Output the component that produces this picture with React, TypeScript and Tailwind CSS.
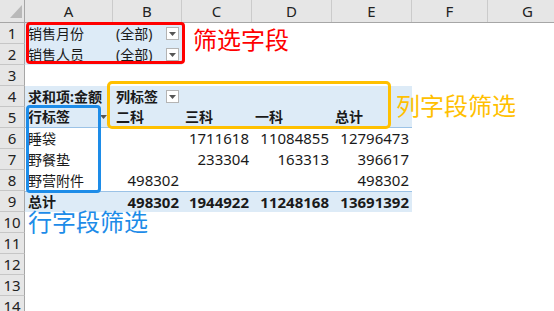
import React from 'react';

type Cell = { t?: string; num?: boolean; bold?: boolean; dd?: 'box' | 'arrow' };
type Row = { blue?: number; line?: 'top' | 'bottom'; bold?: boolean; cells: Cell[] };

const colNames = ['A', 'B', 'C', 'D', 'E', 'F', 'G'];
const colWidths = ['w-[88px]', 'w-[69px]', 'w-[70px]', 'w-[80px]', 'w-[80px]', 'w-[76px]', 'w-[80px]'];

const n = (t: string): Cell => ({ t, num: true });

const rows: Row[] = [
  { blue: 2, cells: [{ t: '销售月份' }, { t: '(全部)', dd: 'box' }] },
  { blue: 2, cells: [{ t: '销售人员' }, { t: '(全部)', dd: 'box' }] },
  { cells: [] },
  { blue: 5, cells: [{ t: '求和项:金额', bold: true }, { t: '列标签', bold: true, dd: 'box' }] },
  {
    blue: 5,
    line: 'bottom',
    cells: [
      { t: '行标签', bold: true, dd: 'arrow' },
      { t: '二科', bold: true },
      { t: '三科', bold: true },
      { t: '一科', bold: true },
      { t: '总计', bold: true },
    ],
  },
  { cells: [{ t: '睡袋' }, {}, n('1711618'), n('11084855'), n('12796473')] },
  { cells: [{ t: '野餐垫' }, {}, n('233304'), n('163313'), n('396617')] },
  { cells: [{ t: '野营附件' }, n('498302'), {}, {}, n('498302')] },
  {
    blue: 5,
    line: 'top',
    bold: true,
    cells: [{ t: '总计' }, n('498302'), n('1944922'), n('11248168'), n('13691392')],
  },
  { cells: [] },
  { cells: [] },
  { cells: [] },
  { cells: [] },
  { cells: [] },
];

function DropButton({ kind }: { kind: 'box' | 'arrow' }) {
  return (
    <span
      className={`ml-auto mr-[3px] flex h-[13px] w-[13px] shrink-0 items-center justify-center ${
        kind === 'box' ? 'border border-[#b4b4b4] bg-white' : ''
      }`}
    >
      <svg width="7" height="4" viewBox="0 0 7 4">
        <path d="M0 0h7L3.5 4z" fill="#555" />
      </svg>
    </span>
  );
}

export default function App() {
  return (
    <div className="relative h-[311px] w-[554px] overflow-hidden bg-white font-['Noto_Sans','Noto_Sans_CJK_SC',sans-serif] text-[#1a1a1a]">
      {/* column headers */}
      <div className="flex h-[23px] border-b border-[#a6a6a6] bg-[#e6e6e6]">
        <div className="relative w-[25px] shrink-0 border-r border-[#a6a6a6]">
          <svg className="absolute left-0 top-0" width="25" height="22" viewBox="0 0 25 22">
            <path d="M10 18L22 18L22 5z" fill="#b9b9b9" />
          </svg>
        </div>
        {colNames.map((c, i) => (
          <div
            key={c}
            className={`${colWidths[i]} flex shrink-0 items-center justify-center border-r border-[#cbcbcb] text-[15px] leading-none text-[#222]`}
          >
            {c}
          </div>
        ))}
      </div>

      {rows.map((row, r) => (
        <div key={r} className="flex h-[21px]">
          <div className="flex w-[25px] shrink-0 items-center justify-center border-b border-r border-[#c6c6c6] border-r-[#a6a6a6] bg-[#e6e6e6] text-[15px] leading-none text-[#222]">
            {r + 1}
          </div>
          {colNames.map((c, i) => {
            const cell = row.cells[i] || {};
            const blue = row.blue !== undefined && i < row.blue;
            const bold = cell.bold || row.bold;
            return (
              <div
                key={c}
                className={`${colWidths[i]} flex shrink-0 items-center overflow-hidden whitespace-nowrap leading-none ${
                  blue ? 'bg-[#ddebf7]' : ''
                } ${blue && row.line === 'bottom' ? 'border-b border-[#9bc2e6]' : ''} ${
                  blue && row.line === 'top' ? 'border-t border-[#9bc2e6]' : ''
                } ${cell.num ? 'justify-end pr-[3px] text-[15px]' : 'pl-[3px] text-[14px]'} ${bold ? 'font-bold' : ''}`}
              >
                {cell.t}
                {cell.dd && <DropButton kind={cell.dd} />}
              </div>
            );
          })}
        </div>
      ))}

      {/* annotations drawn over the sheet */}
      <div className="absolute left-[26px] top-[22px] h-[42px] w-[159px] rounded-[4px] border-[3px] border-[#ff0000]" />
      <div className="absolute left-[193px] top-[28px] text-[24px] leading-[24px] text-[#ff0000]">筛选字段</div>

      <div className="absolute left-[107px] top-[81px] h-[48px] w-[284px] rounded-[5px] border-[3px] border-[#ffc000]" />
      <div className="absolute left-[396px] top-[94px] text-[24px] leading-[24px] text-[#ffc000]">列字段筛选</div>

      <div className="absolute left-[26px] top-[105px] h-[88px] w-[75px] rounded-[4px] border-[3px] border-[#1d8ce8]" />
      <div className="absolute left-[28px] top-[210px] text-[24px] leading-[24px] text-[#1d8ce8]">行字段筛选</div>
    </div>
  );
}
